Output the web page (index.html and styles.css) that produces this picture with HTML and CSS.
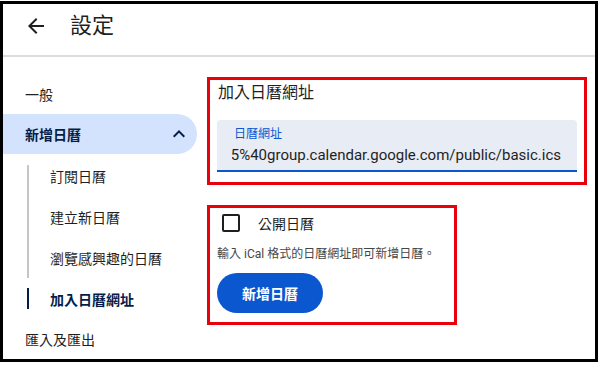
FILE: index.html
```html
<!DOCTYPE html>
<html lang="zh-Hant">

<head>
    <meta charset="utf-8">
    <meta name="viewport" content="width=device-width, initial-scale=1.0">
    <title>設定</title>

    <link rel="stylesheet" href="styles.css">
</head>

<body>

    <div class="ram">
        <header class="topbar">
            <span class="tilbage">
                <svg width="24" height="24" viewBox="0 0 24 24"><path d="M20 11H7.83l5.59-5.59L12 4l-8 8 8 8 1.41-1.41L7.83 13H20v-2z" fill="#1f1f1f"/></svg>
            </span>
            <h1>設定</h1>
        </header>

        <div class="indhold">
            <nav class="sidebar">
                <div class="punkt">一般</div>
                <div class="punkt aaben">
                    <span>新增日曆</span>
                    <svg width="24" height="24" viewBox="0 0 24 24"><path d="M12 8l-6 6 1.41 1.41L12 10.83l4.59 4.58L18 14z" fill="#041e49"/></svg>
                </div>
                <div class="under">
                    <div class="underpunkt">訂閱日曆</div>
                    <div class="underpunkt">建立新日曆</div>
                    <div class="underpunkt">瀏覽感興趣的日曆</div>
                    <div class="underpunkt valgt">加入日曆網址</div>
                </div>
                <div class="punkt">匯入及匯出</div>
            </nav>

            <main class="hoved">
                <section class="boks boks-url">
                    <h2>加入日曆網址</h2>
                    <div class="felt">
                        <div class="etiket">日曆網址</div>
                        <div class="vaerdi"><span>https://calendar.google.com/calendar/ical/c_1a2b3c4d05%40group.calendar.google.com/public/basic.ics</span></div>
                    </div>
                </section>

                <section class="boks boks-tilfoej">
                    <label class="check">
                        <span class="kasse"></span>
                        <span>公開日曆</span>
                    </label>
                    <p class="hjaelp">輸入 iCal 格式的日曆網址即可新增日曆。</p>
                    <button class="knap">新增日曆</button>
                </section>
            </main>
        </div>
    </div>

</body>

</html>
```

FILE: styles.css
```css
body {
    margin: 0;
    background-color: white;
    font-family: Roboto, "Noto Sans CJK TC", sans-serif;
    color: #1f1f1f;
}

.ram {
    box-sizing: border-box;
    width: 598px;
    height: 361px;
    margin-top: 1px;
    border: 3px solid black;
    overflow: hidden;
    display: flex;
    flex-direction: column;
}

/* TOPBAR */
.topbar {
    height: 46px;
    padding: 0 0 8px 21px;
    display: flex;
    align-items: center;
    border-bottom: 2px solid #dadce0;
}

.tilbage {
    display: flex;
    width: 24px;
    height: 24px;
}

.topbar h1 {
    margin: 0 0 0 22px;
    font-size: 22px;
    font-weight: 400;
    line-height: 28px;
}

.indhold {
    display: flex;
    flex: 1;
}

/* SIDEBAR */
.sidebar {
    width: 194px;
    padding-top: 17px;
    flex-shrink: 0;
}

.punkt {
    height: 40px;
    padding-left: 22px;
    display: flex;
    align-items: center;
    font-size: 14px;
}

.aaben {
    justify-content: space-between;
    padding-right: 6px;
    background-color: #d3e3fd;
    border-radius: 0 20px 20px 0;
    color: #041e49;
    font-weight: 700;
}

.under {
    margin-left: 24px;
    margin-top: 1px;
}

.underpunkt {
    position: relative;
    height: 41px;
    padding-left: 23px;
    display: flex;
    align-items: center;
    font-size: 14px;
    color: #1f1f1f;
}

.underpunkt::before {
    content: "";
    position: absolute;
    left: 0;
    top: 0;
    bottom: 0;
    width: 2px;
    background-color: #c4c7c5;
}

.underpunkt:first-child::before {
    top: 10px;
}

.valgt {
    color: #041e49;
    font-weight: 700;
}

.valgt::before {
    top: 10px;
    bottom: 10px;
    background-color: #041e49;
}

/* HOVED */
.hoved {
    padding: 20px 0 0 10px;
}

.boks {
    box-sizing: border-box;
    border: 3px solid #e8000b;
}

.boks-url {
    width: 380px;
    height: 108px;
    padding: 1px 7px 0 7px;
}

.boks-url h2 {
    margin: 0 0 15px 1px;
    font-size: 16px;
    font-weight: 400;
    line-height: 24px;
}

.felt {
    box-sizing: border-box;
    height: 52px;
    padding: 6px 16px 0 15px;
    background-color: #e8ecf4;
    border-radius: 4px 4px 0 0;
    border-bottom: 2px solid #0b57d0;
}

.etiket {
    padding-left: 2px;
    font-size: 12px;
    line-height: 16px;
    color: #0b57d0;
}

.vaerdi {
    margin-top: 3px;
    display: flex;
    justify-content: flex-end;
    overflow: hidden;
    white-space: nowrap;
    font-size: 15px;
    line-height: 20px;
}

.vaerdi span {
    flex-shrink: 0;
}

.boks-tilfoej {
    width: 250px;
    height: 120px;
    margin-top: 20px;
    padding: 6px 0 0 7px;
}

.check {
    display: flex;
    align-items: center;
    height: 18px;
    padding-left: 5px;
    font-size: 14px;
}

.kasse {
    box-sizing: border-box;
    width: 18px;
    height: 18px;
    margin-right: 18px;
    border: 2px solid #1f1f1f;
    border-radius: 2px;
}

.hjaelp {
    margin: 13px 0 0 0;
    font-size: 12px;
    line-height: 18px;
    color: #444746;
}

.knap {
    margin-top: 10px;
    height: 40px;
    padding: 0 25px;
    border: none;
    border-radius: 20px;
    background-color: #0b57d0;
    color: white;
    font-family: Roboto, "Noto Sans CJK TC", sans-serif;
    font-size: 14px;
    font-weight: 700;
}
```
